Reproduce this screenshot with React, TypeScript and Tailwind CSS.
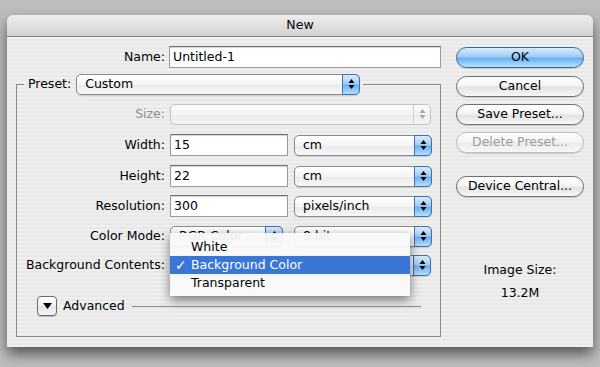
import React from "react";

const Arrows = ({ color = "#000" }: { color?: string }) => (
  <svg width="7" height="12" viewBox="0 0 7 12">
    <polygon points="3.5,1 6.5,5 0.5,5" fill={color} />
    <polygon points="0.5,7 6.5,7 3.5,11" fill={color} />
  </svg>
);

function Popup({
  w,
  text,
  disabled,
}: {
  w: string;
  text: string;
  disabled?: boolean;
}) {
  return (
    <div
      className={
        disabled
          ? `${w} flex h-[21px] items-stretch rounded-[5px] border border-[#c2c2c2] bg-[linear-gradient(#fbfbfb,#f3f3f3_50%,#ebebeb_51%,#f5f5f5)]`
          : `${w} flex h-[21px] items-stretch rounded-[5px] border border-[#8a8a8a] bg-[linear-gradient(#ffffff,#f4f4f4_50%,#e9e9e9_51%,#f8f8f8)] shadow-[0_1px_1px_rgba(0,0,0,0.12)]`
      }
    >
      <div className="flex flex-1 items-center overflow-hidden whitespace-nowrap pl-[8px] leading-none">
        {text}
      </div>
      {disabled ? (
        <div className="flex w-[17px] items-center justify-center rounded-r-[4px] border-l border-[#cfcfcf]">
          <Arrows color="#a8a8a8" />
        </div>
      ) : (
        <div className="-my-px -mr-px flex w-[18px] items-center justify-center rounded-r-[5px] border border-[#3f6fb5] bg-[linear-gradient(#d9ecfd,#a2cdf5_45%,#6eb1f0_55%,#b4e0ff)]">
          <Arrows />
        </div>
      )}
    </div>
  );
}

function Field({ w, value }: { w: string; value: string }) {
  return (
    <div
      className={`${w} flex h-[22px] items-center border border-[#9a9a9a] border-t-[#6e6e6e] bg-white pl-[3px] leading-none shadow-[inset_0_1px_1px_rgba(0,0,0,0.18)]`}
    >
      {value}
    </div>
  );
}

function Btn({
  text,
  primary,
  disabled,
  extra = "",
}: {
  text: string;
  primary?: boolean;
  disabled?: boolean;
  extra?: string;
}) {
  const cls = primary
    ? "border-[#3466b0] bg-[linear-gradient(#d8ecfd,#9fcdf6_45%,#6bb0f0_55%,#b8e3ff)] text-black"
    : disabled
    ? "border-[#bdbdbd] bg-[linear-gradient(#fdfdfd,#f5f5f5_45%,#ebebeb_55%,#f7f7f7)] text-[#9b9b9b]"
    : "border-[#6e6e6e] bg-[linear-gradient(#ffffff,#f5f5f5_45%,#e3e3e3_55%,#f8f8f8)] text-black";
  return (
    <div
      className={`${extra} flex h-[21px] w-[128px] items-center justify-center rounded-full border leading-none shadow-[0_1px_1px_rgba(0,0,0,0.15)] ${cls}`}
    >
      {text}
    </div>
  );
}

function Row({
  label,
  children,
  gray,
  extra = "",
}: {
  label: string;
  children: React.ReactNode;
  gray?: boolean;
  extra?: string;
}) {
  return (
    <div className={`${extra} flex h-[22px] items-center gap-[5px]`}>
      <div
        className={`w-[148px] text-right leading-none ${gray ? "text-[#8f8f8f]" : "text-black"}`}
      >
        {label}
      </div>
      {children}
    </div>
  );
}

export default function App() {
  return (
    <div className="h-[367px] w-[600px] overflow-hidden bg-[#bdbdbd] pl-[7px] pt-[15px] font-['DejaVu_Sans',sans-serif] text-[12.5px] text-black">
      <div className="w-[586px] rounded-t-[6px] shadow-[0_7px_14px_rgba(0,0,0,0.55)]">
        <div className="flex h-[22px] items-center justify-center rounded-t-[6px] border-b border-[#858585] bg-[linear-gradient(#eeeeee,#d2d2d2)] leading-none">
          New
        </div>
        <div className="flex h-[310px] bg-[repeating-linear-gradient(180deg,#efefef_0px,#efefef_2px,#e8e8e8_2px,#e8e8e8_4px)]">
          {/* left column */}
          <div className="w-[434px] pl-[9px] pt-[9px]">
            <div className="flex h-[22px] items-center gap-[4px]">
              <div className="w-[149px] text-right leading-none">Name:</div>
              <Field w="w-[272px]" value="Untitled-1" />
            </div>
            {/* preset header row */}
            <div className="mt-[5px] flex h-[22px] items-center">
              <div className="h-[11px] w-[8px] self-end border-l border-t border-[#8a8a8a]" />
              <div className="ml-[4px] leading-none">Preset:</div>
              <div className="ml-[5px]">
                <Popup w="w-[284px]" text="Custom" />
              </div>
              <div className="ml-[3px] h-[11px] flex-1 self-end border-r border-t border-[#8a8a8a]" />
            </div>
            {/* box */}
            <div className="w-[425px] border-x border-b border-[#8a8a8a] pb-[19px] pt-[8px]">
              <Row label="Size:" gray>
                <Popup w="w-[261px]" text="" disabled />
              </Row>
              <Row label="Width:" extra="mt-[9px]">
                <Field w="w-[118px]" value="15" />
                <div className="ml-[1px]">
                  <Popup w="w-[138px]" text="cm" />
                </div>
              </Row>
              <Row label="Height:" extra="mt-[9px]">
                <Field w="w-[118px]" value="22" />
                <div className="ml-[1px]">
                  <Popup w="w-[138px]" text="cm" />
                </div>
              </Row>
              <Row label="Resolution:" extra="mt-[8px]">
                <Field w="w-[118px]" value="300" />
                <div className="ml-[1px]">
                  <Popup w="w-[138px]" text="pixels/inch" />
                </div>
              </Row>
              <div className="relative">
                <Row label="Color Mode:" extra="mt-[8px]">
                  <Popup w="w-[113px]" text="RGB Color" />
                  <div className="ml-[6px]">
                    <Popup w="w-[138px]" text="8 bit" />
                  </div>
                </Row>
                <Row label="Background Contents:" extra="mt-[7px]">
                  <Popup w="w-[261px]" text="" />
                </Row>
                {/* open menu */}
                <div className="absolute left-[153px] top-[8px] w-[240px] bg-[#f9f9f9]/95 pb-[4px] pt-[5px] shadow-[0_4px_10px_rgba(0,0,0,0.5)]">
                  <div className="flex h-[18px] items-center pl-[21px] leading-none">White</div>
                  <div className="flex h-[18px] items-center bg-[#3a76d6] pl-[5px] leading-none text-white">
                    <span className="w-[16px] text-[14px] font-bold">✓</span>
                    <span>Background Color</span>
                  </div>
                  <div className="flex h-[18px] items-center pl-[21px] leading-none">Transparent</div>
                </div>
              </div>
              <div className="mt-[19px] flex h-[22px] items-center">
                <div className="ml-[20px] flex h-[20px] w-[20px] items-center justify-center rounded-[4px] border border-[#6a6a6a] bg-[linear-gradient(#ffffff,#f0f0f0_50%,#e4e4e4_51%,#f6f6f6)] shadow-[0_1px_1px_rgba(0,0,0,0.2)]">
                  <svg width="9" height="6" viewBox="0 0 9 6">
                    <polygon points="0,0 9,0 4.5,6" fill="#000" />
                  </svg>
                </div>
                <div className="ml-[6px] leading-none">Advanced</div>
                <div className="ml-[7px] mr-[19px] h-px flex-1 bg-[#8a8a8a]" />
              </div>
            </div>
          </div>
          {/* right column */}
          <div className="flex w-[152px] flex-col pl-[15px] pr-[9px] pt-[10px]">
            <Btn text="OK" primary />
            <Btn text="Cancel" extra="mt-[8px]" />
            <Btn text="Save Preset..." extra="mt-[7px]" />
            <Btn text="Delete Preset..." disabled extra="mt-[7px]" />
            <Btn text="Device Central..." extra="mt-[23px]" />
            <div className="mt-[65px] text-center leading-[15px]">Image Size:</div>
            <div className="mt-[8px] text-center leading-[15px]">13.2M</div>
          </div>
        </div>
      </div>
    </div>
  );
}
